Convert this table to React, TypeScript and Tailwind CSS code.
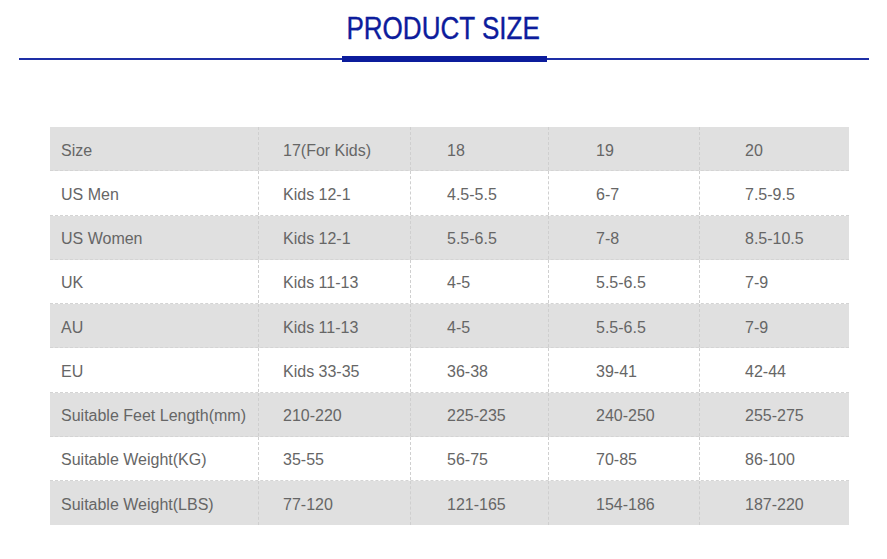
import React from "react";

const rows: string[][] = [
  ["Size", "17(For Kids)", "18", "19", "20"],
  ["US Men", "Kids 12-1", "4.5-5.5", "6-7", "7.5-9.5"],
  ["US Women", "Kids 12-1", "5.5-6.5", "7-8", "8.5-10.5"],
  ["UK", "Kids 11-13", "4-5", "5.5-6.5", "7-9"],
  ["AU", "Kids 11-13", "4-5", "5.5-6.5", "7-9"],
  ["EU", "Kids 33-35", "36-38", "39-41", "42-44"],
  ["Suitable Feet Length(mm)", "210-220", "225-235", "240-250", "255-275"],
  ["Suitable Weight(KG)", "35-55", "56-75", "70-85", "86-100"],
  ["Suitable Weight(LBS)", "77-120", "121-165", "154-186", "187-220"],
];

const padClasses = [
  "pl-[11px]",
  "pl-[24px] border-l border-dashed border-[#cfcfcf]",
  "pl-[36px] border-l border-dashed border-[#cfcfcf]",
  "pl-[47px] border-l border-dashed border-[#cfcfcf]",
  "pl-[45px] border-l border-dashed border-[#cfcfcf]",
];

export default function App() {
  return (
    <div
      className="w-[887px] h-[559px] bg-white overflow-hidden"
      style={{ fontFamily: '"Liberation Sans", Arial, sans-serif' }}
    >
      <div className="pt-[13px] flex justify-center">
        <div className="h-[31px] text-[31px] leading-none text-[#0c1c9c] scale-x-[0.84] whitespace-nowrap [-webkit-text-stroke:0.4px_#0c1c9c]">
          PRODUCT SIZE
        </div>
      </div>
      <div className="mt-[12px] pl-[19px] pr-[18px] flex items-center h-[6px]">
        <div className="flex-1 h-[2px] bg-[#1e2fa6]" />
        <div className="w-[205px] h-[6px] bg-[#0c1c9c]" />
        <div className="flex-1 h-[2px] bg-[#1e2fa6]" />
      </div>
      <div className="mt-[65px] ml-[50px] w-[799px]">
        {rows.map((r, i) => (
          <div
            key={i}
            className={
              "grid grid-cols-[208px_152px_138px_151px_150px] h-[44.25px] " +
              (i % 2 === 0 ? "bg-[#e0e0e0] " : "bg-white ") +
              (i < rows.length - 1 ? "border-b border-dashed border-[#d4d4d4]" : "")
            }
          >
            {r.map((c, j) => (
              <div
                key={j}
                className={"flex items-center pt-[4px] text-[16px] text-[#666666] whitespace-nowrap " + padClasses[j]}
              >
                {c}
              </div>
            ))}
          </div>
        ))}
      </div>
    </div>
  );
}
